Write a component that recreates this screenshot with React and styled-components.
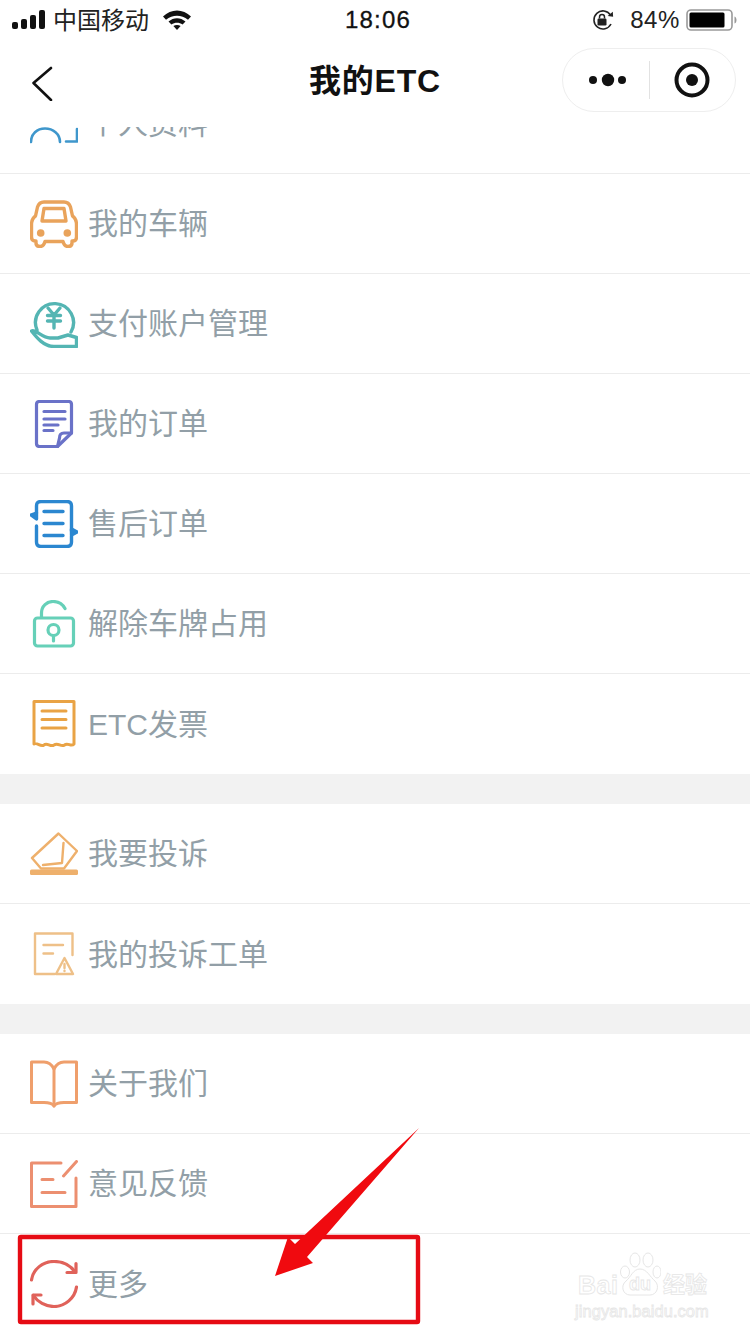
import React from 'react';
import styled, { createGlobalStyle } from 'styled-components';

const GlobalStyle = createGlobalStyle`
  html, body {
    margin: 0;
    padding: 0;
    background: #fff;
  }
  * {
    box-sizing: border-box;
  }
`;

const Page = styled.div`
  position: relative;
  width: 750px;
  height: 1334px;
  overflow: hidden;
  display: flex;
  flex-direction: column;
  background: #fff;
  font-family: "Liberation Sans", "Noto Sans CJK SC", sans-serif;
`;

const Header = styled.header`
  flex: none;
  height: 127px;
  background: #fff;
`;

const StatusBar = styled.div`
  height: 40px;
  padding: 0 12px;
  display: grid;
  grid-template-columns: 1fr auto 1fr;
  align-items: center;
  color: #111;
  font-size: 24px;
`;

const StatusLeft = styled.div`
  display: flex;
  align-items: center;
`;

const Carrier = styled.span`
  margin: 0 14px 3px 8px;
  font-family: "Noto Sans CJK SC", sans-serif;
  font-size: 24px;
  line-height: 30px;
  color: #222;
`;

const Clock = styled.span`
  margin-left: 6px;
  font-size: 24px;
  letter-spacing: 1.2px;
  -webkit-text-stroke: 0.3px #111;
`;

const StatusRight = styled.div`
  display: flex;
  align-items: center;
  justify-content: flex-end;
`;

const Percent = styled.span`
  margin: 0 6px 0 15px;
  font-size: 24px;
  letter-spacing: 0.6px;
  color: #222;
`;

const NavBar = styled.nav`
  height: 87px;
  padding: 8px 14px 15px;
  display: grid;
  grid-template-columns: 1fr auto 1fr;
  align-items: center;
`;

const BackSlot = styled.div`
  padding-left: 16px;
  display: flex;
  align-items: center;
`;

const Title = styled.h1`
  margin: 0 0 4px;
  font-size: 32px;
  font-weight: 700;
  letter-spacing: 0.8px;
  color: #111;
  font-family: "Liberation Sans", "Noto Sans CJK SC", sans-serif;
`;

const Capsule = styled.div`
  justify-self: end;
  width: 174px;
  height: 64px;
  border: 1px solid #eeeeee;
  border-radius: 32px;
  display: flex;
  align-items: center;
`;

const CapsuleSlot = styled.div`
  flex: 1;
  display: flex;
  align-items: center;
  justify-content: center;
`;

const CapsuleLine = styled.div`
  width: 1px;
  height: 38px;
  background: #e2e2e2;
`;

const Scroller = styled.main`
  flex: 1;
  min-height: 0;
  overflow: hidden;
`;

const Section = styled.section`
  background: #fff;
  margin-top: ${p => p.$offset || 0}px;
  & + & {
    border-top: 30px solid #f2f2f2;
  }
`;

const Row = styled.div`
  height: 100px;
  padding-left: 30px;
  display: flex;
  align-items: center;
  gap: 10px;
  border-bottom: ${p => (p.$last ? 'none' : '1px solid #ececec')};
`;

const IconBox = styled.svg`
  flex: none;
  width: 48px;
  height: 48px;
  fill: none;
  stroke: ${p => p.$color};
  stroke-width: ${p => p.$weight || 3}px;
  stroke-linecap: round;
  stroke-linejoin: round;
`;

const Label = styled.span`
  margin-top: 1px;
  font-family: "Liberation Sans", "Noto Sans CJK SC", sans-serif;
  font-size: 30px;
  font-weight: 400;
  color: #929fa7;
  line-height: 40px;
`;

const Annotation = styled.svg`
  position: absolute;
  left: 0;
  top: 0;
  width: 750px;
  height: 1334px;
  pointer-events: none;
`;

const Watermark = styled.div`
  position: absolute;
  left: 575px;
  top: 1252px;
  width: 140px;
  color: #fff;
  -webkit-text-stroke: 0.8px #e6e6e6;
`;

const MarkTop = styled.div`
  height: 46px;
  display: flex;
  align-items: flex-end;
`;

const MarkBai = styled.span`
  font-size: 25px;
  line-height: 25px;
  font-weight: 700;
  width: 46px;
  padding-left: 3px;
  letter-spacing: 0.5px;
`;

const MarkPaw = styled.svg`
  flex: none;
  width: 42px;
  height: 46px;
  margin-left: -2px;
`;

const MarkName = styled.span`
  margin-left: 2px;
  margin-bottom: 3px;
  font-family: "Noto Sans CJK SC", sans-serif;
  font-size: 22px;
  line-height: 26px;
  font-weight: 700;
`;

const MarkUrl = styled.div`
  margin-top: 3px;
  font-size: 16.4px;
  line-height: 20px;
  letter-spacing: 0.1px;
  white-space: nowrap;
`;

const Signal = () => (
  <svg width="33" height="20" viewBox="0 0 33 20">
    <rect x="0" y="12" width="6" height="7" rx="2" fill="#111" />
    <rect x="9" y="9" width="6" height="10" rx="2" fill="#111" />
    <rect x="18" y="5" width="6" height="14" rx="2" fill="#111" />
    <rect x="27" y="0" width="6" height="19" rx="2" fill="#111" />
  </svg>
);

const Wifi = () => (
  <svg width="28" height="20" viewBox="0 0 28 20">
    <path d="M0 6.5C8 -1.5 20 -1.5 28 6.5L25 9.8C18.5 4.5 9.5 4.5 3 9.8Z" fill="#111" />
    <path d="M5.5 11.5C10.5 7 17.5 7 22.5 11.5L19.6 14.6C16.2 12 11.8 12 8.4 14.6Z" fill="#111" />
    <path d="M10.4 16C12.4 14.6 15.6 14.6 17.6 16L14 20Z" fill="#111" />
  </svg>
);

const RotationLock = () => (
  <svg width="24" height="22" viewBox="0 0 24 22">
    <path d="M19.5 6A9 9 0 1 0 20 15" fill="none" stroke="#222" strokeWidth="1.6" />
    <path d="M17 7.5L22.5 7.5L21.5 2.5Z" fill="#222" transform="rotate(8 20 5)" />
    <rect x="6.5" y="9.5" width="9" height="7" rx="1.2" fill="#222" />
    <path d="M8.5 9.5V8a2.5 2.5 0 0 1 5 0v1.5" fill="none" stroke="#222" strokeWidth="1.5" />
  </svg>
);

const Battery = () => (
  <svg width="52" height="24" viewBox="0 0 52 24">
    <rect x="1" y="2" width="45" height="20" rx="4" fill="none" stroke="#999" strokeWidth="1.6" />
    <rect x="3.5" y="4.5" width="35" height="15" rx="1.5" fill="#000" />
    <path d="M48.5 8.5C50 9 50.5 10.5 50.5 12S50 15 48.5 15.5Z" fill="#999" />
  </svg>
);

const BackArrow = () => (
  <svg width="24" height="42" viewBox="0 0 24 42">
    <path d="M21 9L3.5 24L21 41" fill="none" stroke="#111" strokeWidth="2.6" strokeLinecap="round" strokeLinejoin="round" />
  </svg>
);

const MoreDots = () => (
  <svg width="40" height="16" viewBox="0 0 40 16">
    <circle cx="7" cy="8" r="4" fill="#111" />
    <circle cx="22" cy="8" r="6.2" fill="#111" />
    <circle cx="36" cy="8" r="4" fill="#111" />
  </svg>
);

const Target = () => (
  <svg width="36" height="36" viewBox="0 0 36 36">
    <circle cx="18" cy="18" r="15.5" fill="none" stroke="#111" strokeWidth="4" />
    <circle cx="18" cy="18" r="6" fill="#111" />
  </svg>
);

const Icon = ({ color, weight, children }) => (
  <IconBox viewBox="0 0 48 48" $color={color} $weight={weight}>
    {children}
  </IconBox>
);

const ProfileIcon = () => (
  <Icon color="#3f97cc" weight={2.6}>
    <path d="M1 42C1 34 7 28.5 15 28.5S30 34 30 42" />
    <path d="M47 29V41.5H36" />
  </Icon>
);

const CarIcon = () => (
  <Icon color="#e9a35b" weight={3.4}>
    <path d="M14 2H34C37.5 2 39.5 4 40.5 7L42.5 16C45.5 18 46.5 21 46.5 25V37C46.5 40 45 41 43 41H42V43C42 46 40 46.5 38 46.5C35.5 46.5 34 45.5 33 41.5H15C14 45.5 12.5 46.5 10 46.5C8 46.5 6 46 6 43V41H5C3 41 1.5 40 1.5 37V25C1.5 21 2.5 18 5.5 16L7.5 7C8.5 4 10.5 2 14 2Z" />
    <path d="M14 8.5H34L36 21H12Z" />
    <circle cx="10.7" cy="33" r="3.8" fill="#e9a35b" stroke="none" />
    <circle cx="37.3" cy="33" r="3.8" fill="#e9a35b" stroke="none" />
  </Icon>
);

const YenIcon = () => (
  <Icon color="#54b5b3" weight={3.4}>
    <path d="M7 30A19 19 0 1 1 41 32" />
    <path d="M1.5 31C6 29 12 38 20 38H28L38 35L46.5 37.5V46.5H24C14 46.5 7 38 1.5 31Z" />
    <path d="M18 8L24 15L30 8M17.5 15.5H30.5M17.5 21H30.5M24 15V28" />
  </Icon>
);

const OrderIcon = () => (
  <Icon color="#6a72c8" weight={3.2}>
    <path d="M9.5 1.5H38.5C40.5 1.5 41.5 2.5 41.5 4.5V33L27.5 46.5H9.5C7.5 46.5 6.5 45.5 6.5 43.5V4.5C6.5 2.5 7.5 1.5 9.5 1.5Z" />
    <path d="M41.5 33H34C31 33 29.5 35 29.5 38L27.5 46.5" />
    <path d="M14 11.5H35M14 19H35M14 25H28M14 30.5H23" />
  </Icon>
);

const AfterSaleIcon = () => (
  <Icon color="#2b87d0" weight={3.4}>
    <path d="M6.5 13V6C6.5 3 8 1.5 11 1.5H37C40 1.5 41.5 3 41.5 6V31" />
    <path d="M41.5 36V42C41.5 45 40 46.5 37 46.5H11C8 46.5 6.5 45 6.5 42V26" />
    <path d="M1 15L6.5 13L6.5 19Z" fill="#2b87d0" />
    <path d="M47 32L41.5 35L41.5 29Z" fill="#2b87d0" />
    <path d="M14 11.5H33M14 23.5H33M14 35.5H33" />
  </Icon>
);

const LockIcon = () => (
  <Icon color="#66d0b8" weight={3.2}>
    <rect x="4.5" y="18" width="39" height="28" rx="3" />
    <path d="M11.5 17V13C11.5 6 17 1.5 23 1.5C28 1.5 32.5 4 35 8.5" />
    <circle cx="23.5" cy="30" r="5.5" />
    <path d="M23.5 36V41" />
  </Icon>
);

const InvoiceIcon = () => (
  <Icon color="#e9a345">
    <path d="M4 44V1.5H44V44C41 47.5 38 42 34.5 45C31 47.5 28 42 24 45C20.5 47.5 17 42 14 45C10.5 47.5 7.5 42 4 44Z" />
    <path d="M12 11H36M12 19.5H36M12 28H36" />
  </Icon>
);

const VoteIcon = () => (
  <Icon color="#eeb06c" weight={2.4}>
    <path d="M28.5 3.5L47 21L34 38.5H11L2 28Z" />
    <path d="M33.5 13L32 33L13 35" />
    <rect x="0" y="39.5" width="48" height="5.5" rx="1.5" fill="#eeb06c" stroke="none" />
  </Icon>
);

const TicketIcon = () => (
  <Icon color="#eec088" weight={2.4}>
    <path d="M24.5 44H5V3.5H42.5V25" />
    <path d="M13.5 15H33M13.5 23.5H23" />
    <path d="M34.5 28L43 44H26Z" />
    <path d="M34.5 34V38M34.5 40.8V41" />
  </Icon>
);

const BookIcon = () => (
  <Icon color="#ef9f6c">
    <path d="M1.5 2H14C18 2 22 5 24 9C26 5 30 2 34 2H46.5V42.5H34C30 42.5 26 43 24 46C22 43 18 42.5 14 42.5H1.5Z" />
    <path d="M24 9V46" />
  </Icon>
);

const FeedbackIcon = () => (
  <Icon color="#ec8f70">
    <path d="M31 3H1.5V46.5H46V18" />
    <path d="M46.5 1.5L33.5 16" />
    <path d="M12 19.5H23M12 32.5H35" />
  </Icon>
);

const MoreIcon = () => (
  <Icon color="#e0625a" weight={3.2}>
    <path d="M1.5 20C3 9 13 1.5 24 1.5C32.5 1.5 40.5 5.5 45 12" />
    <path d="M46 3.5V12.5H37" />
    <path d="M46.5 27C45 38 35 46.5 24 46.5C15.5 46.5 7.5 42 3.5 35.5" />
    <path d="M3 44V35H11" />
  </Icon>
);

const sections = [
  {
    offset: -53,
    rows: [
      { label: '个人资料', icon: <ProfileIcon /> },
      { label: '我的车辆', icon: <CarIcon /> },
      { label: '支付账户管理', icon: <YenIcon /> },
      { label: '我的订单', icon: <OrderIcon /> },
      { label: '售后订单', icon: <AfterSaleIcon /> },
      { label: '解除车牌占用', icon: <LockIcon /> },
      { label: 'ETC发票', icon: <InvoiceIcon /> },
    ],
  },
  {
    rows: [
      { label: '我要投诉', icon: <VoteIcon /> },
      { label: '我的投诉工单', icon: <TicketIcon /> },
    ],
  },
  {
    rows: [
      { label: '关于我们', icon: <BookIcon /> },
      { label: '意见反馈', icon: <FeedbackIcon /> },
      { label: '更多', icon: <MoreIcon /> },
    ],
  },
];

const App = () => (
  <Page>
    <GlobalStyle />
    <Header>
      <StatusBar>
        <StatusLeft>
          <Signal />
          <Carrier>中国移动</Carrier>
          <Wifi />
        </StatusLeft>
        <Clock>18:06</Clock>
        <StatusRight>
          <RotationLock />
          <Percent>84%</Percent>
          <Battery />
        </StatusRight>
      </StatusBar>
      <NavBar>
        <BackSlot>
          <BackArrow />
        </BackSlot>
        <Title>我的ETC</Title>
        <Capsule>
          <CapsuleSlot>
            <MoreDots />
          </CapsuleSlot>
          <CapsuleLine />
          <CapsuleSlot>
            <Target />
          </CapsuleSlot>
        </Capsule>
      </NavBar>
    </Header>
    <Scroller>
      {sections.map((section, i) => (
        <Section key={i} $offset={section.offset}>
          {section.rows.map((row, j) => (
            <Row key={row.label} $last={j === section.rows.length - 1}>
              {row.icon}
              <Label>{row.label}</Label>
            </Row>
          ))}
        </Section>
      ))}
    </Scroller>
    <Watermark>
      <MarkTop>
        <MarkBai>Bai</MarkBai>
        <MarkPaw viewBox="0 0 42 46">
          <g fill="#fff" stroke="#e6e6e6" strokeWidth="1">
            <ellipse cx="6" cy="20" rx="4.5" ry="6" />
            <ellipse cx="16" cy="8" rx="5" ry="7" />
            <ellipse cx="29" cy="8" rx="5" ry="7" />
            <ellipse cx="38" cy="20" rx="4" ry="6" />
            <path d="M21 17C28 17 31 25 36 29C41 34 38 43 31 43H11C4 43 1 34 7 29C12 25 14 17 21 17Z" />
          </g>
          <text x="10" y="38" fontSize="18" fontWeight="700" fill="#fff" stroke="#e6e6e6" strokeWidth="0.8">du</text>
        </MarkPaw>
        <MarkName>经验</MarkName>
      </MarkTop>
      <MarkUrl>jingyan.baidu.com</MarkUrl>
    </Watermark>
    <Annotation viewBox="0 0 750 1334">
      <rect x="20" y="1237" width="398" height="85" fill="none" stroke="#e60b14" strokeWidth="4.4" rx="1" />
      <path d="M419 1128L295 1244L288 1237L275 1276L313 1263L307 1257Z" fill="#f00a0f" />
    </Annotation>
  </Page>
);

export default App;
